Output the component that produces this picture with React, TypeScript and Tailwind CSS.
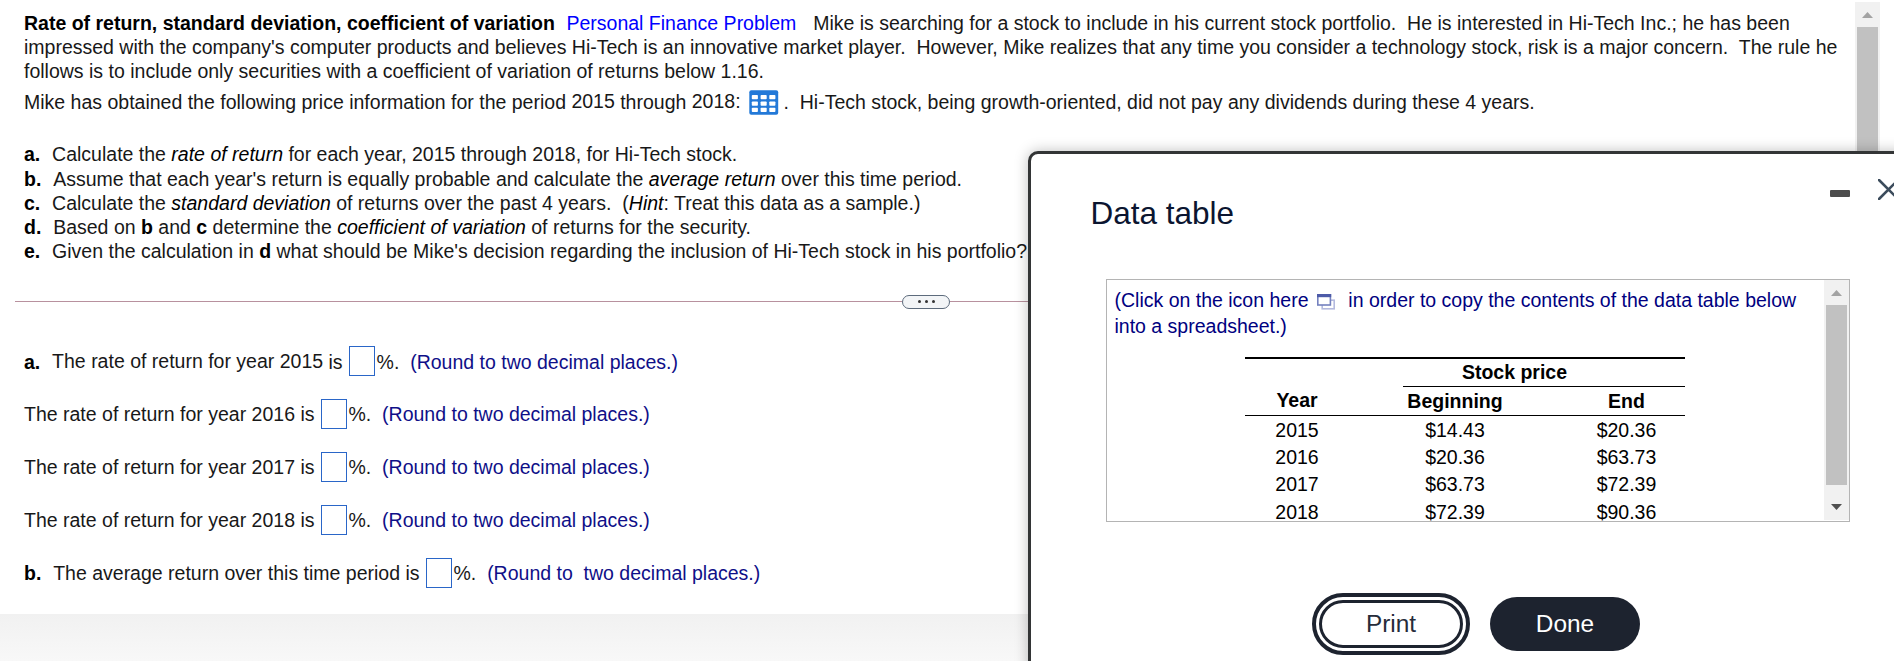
import type { ReactNode } from "react";

const NB = "\u00a0";

function AnswerBox() {
  return <span className="mr-[1.6px] ml-px h-[30px] w-[26px] shrink-0 border border-[#2a66c8] bg-white" />;
}

function AnswerRow({ label, children, hint = "(Round to two decimal places.)" }: { label?: string; children: ReactNode; hint?: string }) {
  return (
    <div className="flex h-[53px] items-start whitespace-pre">
      {label && <b className="mr-px mt-[3px] text-black">{label + NB + NB}</b>}
      <span className="mt-[3px]">{children}</span>
      <AnswerBox />
      <span className="mt-[3px]">{"%." + NB + NB}</span>
      <span className="mt-[3px] text-[#0f0f88]">{hint}</span>
    </div>
  );
}

function Item({ label, children }: { label: string; children: ReactNode }) {
  return (
    <div className="whitespace-pre">
      <b className="mr-px text-black">{label + NB + NB}</b>
      {children}
    </div>
  );
}

function GridIcon() {
  return (
    <svg className="mr-[4px] ml-[3.5px] shrink-0" width="30" height="25" viewBox="0 0 30 25">
      <rect x="0.3" y="0.2" width="28.9" height="24.6" rx="2" fill="#2379d8" />
      {[5, 11.5, 17.8].map((y) =>
        [2.8, 11.6, 20.3].map((x) => <rect key={x + "-" + y} x={x} y={y} width="6.1" height="4.2" rx="0.8" fill="#fff" />)
      )}
    </svg>
  );
}

function CopyIcon() {
  return (
    <svg className="mr-[2.6px] ml-[3px] inline-block align-[-3px]" width="18" height="16" viewBox="0 0 18 16">
      <rect x="5.2" y="6.2" width="12" height="8.6" fill="#fff" stroke="#b4bade" strokeWidth="1.6" />
      <rect x="0.8" y="0.8" width="12.6" height="10.2" fill="#fff" stroke="#7481bf" strokeWidth="1.6" />
      <rect x="0" y="0" width="14.2" height="3.2" fill="#4d5ba8" />
    </svg>
  );
}

const rows = [
  ["2015", "$14.43", "$20.36"],
  ["2016", "$20.36", "$63.73"],
  ["2017", "$63.73", "$72.39"],
  ["2018", "$72.39", "$90.36"],
];

function PriceTable() {
  return (
    <div className="mt-[18px] ml-[130.5px] w-[440px] text-black">
      <div className="flex h-[59px] border-t-2 border-b border-black font-bold leading-[24px]">
        <div className="w-[158px] shrink-0 pt-[29px]">
          <div className="w-[104px] text-center">Year</div>
        </div>
        <div className="flex-1">
          <div className="h-[28px] border-b border-black pt-px pr-[59px] text-center">Stock price</div>
          <div className="flex justify-between pt-[2px]">
            <div className="w-[104px] text-center">Beginning</div>
            <div className="w-[117px] text-center">End</div>
          </div>
        </div>
      </div>
      <div className="pt-px">
        {rows.map(([year, start, end]) => (
          <div key={year} className="flex leading-[27px] last:pt-px">
            <div className="w-[104px] text-center">{year}</div>
            <div className="ml-[54px] w-[104px] text-center">{start}</div>
            <div className="ml-auto w-[117px] text-center">{end}</div>
          </div>
        ))}
      </div>
    </div>
  );
}

function DataTableDialog() {
  return (
    <div className="absolute top-[151px] left-[1028px] h-[560px] w-[910px] rounded-[10px] border-[3px] border-[#333536] bg-white pt-[25px] shadow-[0_0_14px_rgba(0,0,0,0.25)]">
      <div className="flex items-start">
        <h2 className="mt-[16px] ml-[59.5px] w-[739.5px] text-[31.5px] leading-[36px] text-[#0b1530]">Data table</h2>
        <span className="mt-[11px] h-[7px] w-[20px] rounded-[1px] bg-[#4c4c4c]" />
        <svg className="ml-[28px]" width="21" height="21" viewBox="0 0 21 21">
          <path d="M1 1L20 20M20 1L1 20" stroke="#3c4c5c" strokeWidth="2.6" strokeLinecap="round" />
        </svg>
      </div>

      <div className="mt-[48px] ml-[75px] flex h-[243px] w-[744px] overflow-hidden border border-[#b4b4b4]">
        <div className="w-[717px] shrink-0 pt-[7px] pl-[7.5px]">
          <div className="leading-[26px] whitespace-pre text-[#000080]">
            <div className="h-[26px]">
              {"(Click on the icon here "}
              <CopyIcon />
              {NB + NB + "in order to copy the contents of the data table below"}
            </div>
            <div>into a spreadsheet.)</div>
          </div>
          <PriceTable />
        </div>
        <div className="flex h-[240px] w-[25px] flex-col items-start bg-[#f1f1f1]">
          <svg className="mt-[10px] ml-[7px]" width="11" height="6" viewBox="0 0 11 6">
            <path d="M0 6L5.5 0L11 6Z" fill="#a3a3a3" />
          </svg>
          <div className="mt-[9px] ml-[2px] h-[180px] w-[21px] bg-[#c1c1c1]" />
          <svg className="mt-[19px] ml-[7px]" width="11" height="6" viewBox="0 0 11 6">
            <path d="M0 0L5.5 6L11 0Z" fill="#505050" />
          </svg>
        </div>
      </div>

      <div className="mt-[71px] ml-[281px] flex items-center gap-[20px] text-[24.4px] leading-[30px]">
        <button className="h-[62px] w-[158px] rounded-full border-4 border-[#1d232f] p-[3px] text-[#262c3a]">
          <span className="flex h-full w-full items-center justify-center rounded-full border-[3px] border-[#1d232f]">Print</span>
        </button>
        <button className="h-[54px] w-[150px] rounded-full bg-[#1d232f] text-white">Done</button>
      </div>
    </div>
  );
}

export default function App() {
  return (
    <div className="relative h-[661px] w-[1894px] overflow-hidden bg-white font-['Liberation_Sans',Arial,sans-serif] text-[19.5px] leading-[24px] text-[#181818]">
      <div className="flex h-[614px]">
        <div className="w-[1855px] shrink-0 pt-[11px]">
          <div className="pl-[24px]">
            <div className="whitespace-pre">
              <b className="mr-[0.7px] text-black">Rate of return, standard deviation, coefficient of variation</b>
              {NB + NB}
              <span className="mr-[0.7px] text-[#0000ff]">Personal Finance Problem</span>
              {NB + NB + NB + "Mike is searching for a stock to include in his current stock portfolio." + NB + " He is interested in Hi-Tech Inc.; he has been"}
            </div>
            <div className="whitespace-pre">
              {"impressed with the company's computer products and believes Hi-Tech is an innovative market player." + NB + " However, Mike realizes that any time you consider a technology stock, risk is a major concern." + NB + " The rule he"}
            </div>
            <div>follows is to include only securities with a coefficient of variation of returns below 1.16.</div>
            <div className="mt-[7px] flex h-[24px] items-start whitespace-pre">
              <span>{"Mike has obtained the following price information for the period "}</span>
              <span className="-mt-px">2015</span>
              <span>{" through "}</span>
              <span className="-mt-px">{"2018: "}</span>
              <GridIcon />
              <span>{"." + NB + " Hi-Tech stock, being growth-oriented, did not pay any dividends during these 4 years."}</span>
            </div>
            <div className="mt-[28px]">
              <div className="h-[25px]">
                <Item label="a.">Calculate the <i className="text-black">rate of return</i> for each year, 2015 through 2018, for Hi-Tech stock.</Item>
              </div>
              <Item label="b.">Assume that each year's return is equally probable and calculate the <i className="text-black">average return</i> over this time period.</Item>
              <Item label="c.">Calculate the <i className="text-black">standard deviation</i> of returns over the past 4 years.{NB} (<i className="text-black">Hint</i>: Treat this data as a sample.)</Item>
              <Item label="d.">Based on <b className="text-black">b</b> and <b className="text-black">c</b> determine the <i className="text-black">coefficient of variation</i> of returns for the security.</Item>
              <Item label="e.">Given the calculation in <b className="text-black">d</b> what should be Mike's decision regarding the inclusion of Hi-Tech stock in his portfolio?</Item>
            </div>
          </div>

          <div className="mt-[32px] ml-[15px] flex h-[14px] items-start">
            <div className="mt-[6px] h-px w-[887px] bg-[#b8919e]" />
            <div className="flex h-[14px] w-[48px] items-center justify-center gap-[4px] rounded-full border border-[#5d6b7c] bg-[#f3f5f7]">
              <span className="mb-px size-[3px] rounded-full bg-[#333]" />
              <span className="mb-px size-[3px] rounded-full bg-[#333]" />
              <span className="mb-px size-[3px] rounded-full bg-[#333]" />
            </div>
            <div className="mt-[6px] h-px flex-1 bg-[#b8919e]" />
          </div>

          <div className="mt-[37px] pl-[24px]">
            <div className="flex h-[53px] items-start whitespace-pre">
              <b className="mt-[4px] mr-px text-black">{"a." + NB + NB}</b>
              <span className="mt-[3px]">The rate of return for year 2015</span>
              <span className="mt-[4px]">{" is "}</span>
              <AnswerBox />
              <span className="mt-[4px]">{"%." + NB + NB}</span>
              <span className="mt-[4px] text-[#0f0f88]">(Round to two decimal places.)</span>
            </div>
            <AnswerRow>{"The rate of return for year 2016 is "}</AnswerRow>
            <AnswerRow>{"The rate of return for year 2017 is "}</AnswerRow>
            <AnswerRow>{"The rate of return for year 2018 is "}</AnswerRow>
            <AnswerRow label="b." hint={"(Round to " + NB + "two decimal places.)"}>{"The average return over this time period is "}</AnswerRow>
          </div>
        </div>
        <div className="mt-[2px] flex w-[25px] flex-col items-start bg-[#f1f1f1]">
          <svg className="mt-[10px] ml-[7px]" width="11" height="6" viewBox="0 0 11 6">
            <path d="M0 6L5.5 0L11 6Z" fill="#a3a3a3" />
          </svg>
          <div className="mt-[9px] ml-[2px] w-[21px] flex-1 bg-[#c1c1c1]" />
        </div>
      </div>
      <div className="h-[47px] bg-linear-to-b from-[#f1f1f1] to-[#f8f8f8]" />
      <DataTableDialog />
    </div>
  );
}
